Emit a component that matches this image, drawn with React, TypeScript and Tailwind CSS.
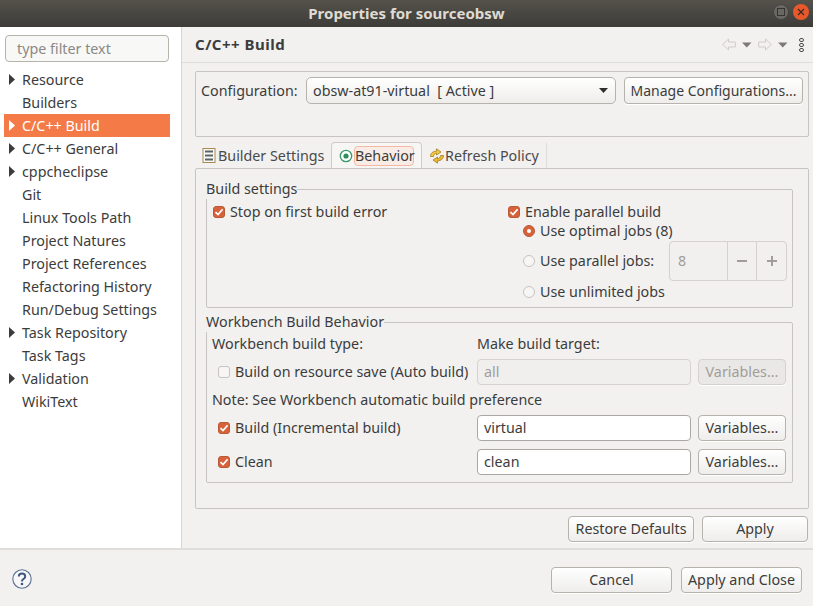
const treeItems = [
  { label: "Resource", arrow: true },
  { label: "Builders" },
  { label: "C/C++ Build", arrow: true, selected: true },
  { label: "C/C++ General", arrow: true },
  { label: "cppcheclipse", arrow: true },
  { label: "Git" },
  { label: "Linux Tools Path" },
  { label: "Project Natures" },
  { label: "Project References" },
  { label: "Refactoring History" },
  { label: "Run/Debug Settings" },
  { label: "Task Repository", arrow: true },
  { label: "Task Tags" },
  { label: "Validation", arrow: true },
  { label: "WikiText" },
]

const Button = ({ label, className = "", disabled = false }: { label: string; className?: string; disabled?: boolean }) => (
  <div
    className={`h-[26px] flex items-center justify-center rounded-[4px] border shadow-[0_1px_0_#ffffff] ${
      disabled
        ? "border-[#d5d1cc] bg-[#e9e8e6] text-[#a19d98]"
        : "border-[#b6b2ac] bg-gradient-to-b from-[#ffffff] to-[#eeedeb] text-[#3c3c3c]"
    } ${className}`}
  >
    {label}
  </div>
)

const Checkbox = ({ checked = false }: { checked?: boolean }) =>
  checked ? (
    <div className="w-[12px] h-[12px] rounded-[3px] bg-[#d7623a] border border-[#b95a36] flex items-center justify-center shrink-0">
      <svg width="10" height="10" viewBox="0 0 10 10">
        <path d="M1.5 5.2 L4 7.6 L8.6 2.2" fill="none" stroke="#ffffff" strokeWidth="1.7" />
      </svg>
    </div>
  ) : (
    <div className="w-[12px] h-[12px] rounded-[3px] bg-[#f7f6f5] border border-[#c6c3bf] shrink-0" />
  )

const Radio = ({ checked = false }: { checked?: boolean }) =>
  checked ? (
    <div className="w-[12px] h-[12px] rounded-full bg-[#d7623a] border border-[#b95a36] flex items-center justify-center shrink-0">
      <div className="w-[4px] h-[4px] rounded-full bg-white" />
    </div>
  ) : (
    <div className="w-[12px] h-[12px] rounded-full bg-[#f7f6f5] border border-[#c6c3bf] shrink-0" />
  )

const TextField = ({ value, disabled = false }: { value: string; disabled?: boolean }) => (
  <div
    className={`w-[214px] h-[26px] flex items-center pl-[6px] rounded-[4px] border ${
      disabled ? "border-[#d5d1cc] bg-[#f0efee] text-[#a19d98]" : "border-[#aaa7a2] bg-white text-[#3c3c3c]"
    }`}
  >
    {value}
  </div>
)

const BuilderIcon = () => (
  <svg width="14" height="15" viewBox="0 0 14 15" className="shrink-0">
    <rect x="1" y="0.5" width="12" height="14" fill="#f8f8f6" stroke="#a88a50" />
    <path d="M3 3.5h8M3 7.5h8M3 11.5h8" stroke="#5b6468" strokeWidth="2" />
  </svg>
)

const BehaviorIcon = () => (
  <svg width="14" height="14" viewBox="0 0 14 14" className="shrink-0">
    <circle cx="7" cy="7" r="5.7" fill="#ffffff" stroke="#3a9a6c" strokeWidth="1.3" />
    <circle cx="7" cy="7" r="2.6" fill="#2e8f5e" />
  </svg>
)

const RefreshIcon = () => (
  <svg width="16" height="16" viewBox="0 0 16 16" className="shrink-0">
    <path d="M1.5 8.5 C1.5 5 4 3.2 7.5 3.2 V0.8 L12 4 L7.5 7 V5.2 C6 5.2 4.8 6.4 4.4 8.5 Z" fill="#f5c842" stroke="#a07d20" strokeWidth="0.8" />
    <path d="M14.5 7.5 C14.5 11 12 12.8 8.5 12.8 V15.2 L4 12 L8.5 9 V10.8 C10 10.8 11.2 9.6 11.6 7.5 Z" fill="#eeb92f" stroke="#a07d20" strokeWidth="0.8" />
  </svg>
)

const NavArrow = ({ flip = false }: { flip?: boolean }) => (
  <svg width="14" height="13" viewBox="0 0 14 13" className={flip ? "-scale-x-100" : ""}>
    <path d="M0.7 6.5 L6.5 1 V4 H13.3 V9 H6.5 V12 Z" fill="#f2f1f0" stroke="#cfccc8" />
  </svg>
)

const SmallDown = () => (
  <svg width="10" height="6" viewBox="0 0 10 6">
    <path d="M0 0.5 H9.5 L4.75 5.5 Z" fill="#7d7a76" />
  </svg>
)

const App = () => {
  return (
    <div className="w-[813px] h-[606px] flex flex-col bg-[#f2f1f0] text-[#3c3c3c] text-[14.3px] font-['Noto_Sans',sans-serif] overflow-hidden">
      {/* title bar */}
      <div className="h-[27px] shrink-0 relative flex items-center justify-center bg-gradient-to-b from-[#55524c] to-[#3d3c38]">
        <span className="font-bold text-[15px] text-[#dfdbd2]">Properties for sourceobsw</span>
        <div className="absolute right-[4px] top-[4px] flex gap-[4px]">
          <div className="w-[16px] h-[16px] rounded-full bg-[#6a6862] border border-[#45433f] flex items-center justify-center">
            <div className="w-[8px] h-[8px] border border-[#35342f]" />
          </div>
          <div className="w-[16px] h-[16px] rounded-full bg-[#e9582b] flex items-center justify-center">
            <svg width="8" height="8" viewBox="0 0 8 8">
              <path d="M1 1 L7 7 M7 1 L1 7" stroke="#3d2a20" strokeWidth="1.3" />
            </svg>
          </div>
        </div>
      </div>

      <div className="h-[521px] shrink-0 flex">
        {/* left tree */}
        <div className="w-[182px] shrink-0 bg-white border-r border-[#d8d6d3] pt-[8px] px-[5px]">
          <div className="w-[164px] h-[27px] flex items-center pl-[11px] rounded-[4px] border border-[#b6b2ac] bg-[#f8f8f7] text-[#8b8985]">
            type filter text
          </div>
          <div className="mt-[6px] -ml-[1px] w-[166px]">
            {treeItems.map((item) => (
              <div
                key={item.label}
                className={`h-[23px] flex items-center ${item.selected ? "bg-[#f47a47] text-white" : ""}`}
              >
                <div className="w-[18px] shrink-0 pl-[5px]">
                  {item.arrow && (
                    <svg width="6" height="11" viewBox="0 0 6 11">
                      <path d="M0 0 L6 5.5 L0 11 Z" fill={item.selected ? "#ffffff" : "#3c3c3c"} />
                    </svg>
                  )}
                </div>
                {item.label}
              </div>
            ))}
          </div>
        </div>

        {/* right page */}
        <div className="flex-1 flex flex-col">
          <div className="h-[36px] shrink-0 pl-[13px] pr-[9px] flex items-center justify-between border-b border-[#dfddda]">
            <span className="font-bold text-[15px] tracking-[0.5px]">C/C++ Build</span>
            <div className="flex items-center gap-[6px]">
              <NavArrow />
              <SmallDown />
              <NavArrow flip />
              <SmallDown />
              <div className="ml-[5px] flex flex-col gap-[1px]">
                <div className="w-[5px] h-[4px] rounded-full border border-[#4c4c4c]" />
                <div className="w-[5px] h-[4px] rounded-full border border-[#4c4c4c]" />
                <div className="w-[5px] h-[4px] rounded-full border border-[#4c4c4c]" />
              </div>
            </div>
          </div>

          <div className="flex-1 pl-[13px] pr-[4px] pt-[8px]">
            {/* configuration */}
            <div className="h-[66px] border border-[#c8c5c1] rounded-[2px] pl-[5px] pt-[5px] flex items-start">
              <span className="w-[105px] h-[27px] flex items-center">Configuration:</span>
              <div className="w-[310px] h-[27px] flex items-center justify-between pl-[6px] pr-[7px] rounded-[5px] border border-[#b6b2ac] bg-gradient-to-b from-[#ffffff] to-[#eeedeb]">
                <span>obsw-at91-virtual&nbsp; [ Active ]</span>
                <svg width="9" height="5" viewBox="0 0 9 5">
                  <path d="M0 0 H9 L4.5 5 Z" fill="#2e2e2e" />
                </svg>
              </div>
              <Button label="Manage Configurations..." className="w-[179px] ml-[8px] h-[27px] text-[14px]" />
            </div>

            {/* tabs */}
            <div className="mt-[5px] h-[26px] flex items-end">
              <div className="h-[25px] w-[136px] flex items-center gap-[2px] pl-[7px] text-[#4a4a4a]">
                <BuilderIcon />
                Builder Settings
              </div>
              <div className="h-[26px] w-[91px] flex items-center gap-[1px] pl-[7px] bg-[#f7f6f5] border border-b-0 border-[#cfccc8] rounded-t-[4px]">
                <BehaviorIcon />
                <span className="w-[60px] text-center rounded-[4px] border border-[#f4b8a0] bg-[#f9ece6] leading-[18px]">Behavior</span>
              </div>
              <div className="h-[25px] w-[125px] flex items-center pl-[7px] border-r border-[#dfddda] text-[#4a4a4a]">
                <RefreshIcon />
                Refresh Policy
              </div>
            </div>

            {/* tab panel */}
            <div className="h-[341px] border border-[#c8c5c1] rounded-[2px] pl-[10px] pr-[15px] pt-[10px]">
              <fieldset className="h-[129px] border border-[#c8c5c1] rounded-[2px]">
                <legend className="-ml-[1px] leading-[20px]">Build settings</legend>
                <div className="flex pl-[6px] pt-[4px]">
                  <div className="w-[295px] flex items-center gap-[5px] h-[18px]">
                    <Checkbox checked />
                    Stop on first build error
                  </div>
                  <div className="flex flex-col">
                    <div className="flex items-center gap-[5px] h-[18px]">
                      <Checkbox checked />
                      Enable parallel build
                    </div>
                    <div className="flex items-center gap-[5px] h-[20px] ml-[15px]">
                      <Radio checked />
                      Use optimal jobs (8)
                    </div>
                    <div className="flex items-center h-[40px] ml-[15px]">
                      <div className="w-[146px] flex items-center gap-[5px]">
                        <Radio />
                        Use parallel jobs:
                      </div>
                      <div className="w-[118px] h-[40px] flex rounded-[4px] border border-[#d5d1cc] bg-[#f1f0ef] text-[#a19d98]">
                        <div className="w-[57px] flex items-center pl-[8px]">8</div>
                        <div className="w-[29px] flex items-center justify-center border-l border-[#d5d1cc]">
                          <div className="w-[10px] h-[2px] bg-[#a19d98]" />
                        </div>
                        <div className="flex-1 flex items-center justify-center border-l border-[#d5d1cc] relative">
                          <div className="w-[10px] h-[2px] bg-[#a19d98]" />
                          <div className="absolute w-[2px] h-[10px] bg-[#a19d98]" />
                        </div>
                      </div>
                    </div>
                    <div className="flex items-center gap-[5px] h-[21px] ml-[15px]">
                      <Radio />
                      Use unlimited jobs
                    </div>
                  </div>
                </div>
              </fieldset>

              <fieldset className="mt-[4px] h-[171px] border border-[#c8c5c1] rounded-[2px]">
                <legend className="-ml-[1px] leading-[20px]">Workbench Build Behavior</legend>
                <div className="pl-[5px] pt-[1px]">
                  <div className="h-[21px] flex items-center">
                    <span className="w-[265px]">Workbench build type:</span>
                    Make build target:
                  </div>
                  <div className="mt-[5px] h-[26px] flex items-center">
                    <div className="w-[265px] flex items-center gap-[5px] pl-[6px]">
                      <Checkbox />
                      Build on resource save (Auto build)
                    </div>
                    <TextField value="all" disabled />
                    <Button label="Variables..." disabled className="w-[88px] ml-[7px]" />
                  </div>
                  <div className="mt-[3px] h-[24px] flex items-center">Note: See Workbench automatic build preference</div>
                  <div className="mt-[3px] h-[26px] flex items-center">
                    <div className="w-[265px] flex items-center gap-[5px] pl-[6px]">
                      <Checkbox checked />
                      Build (Incremental build)
                    </div>
                    <TextField value="virtual" />
                    <Button label="Variables..." className="w-[88px] ml-[7px]" />
                  </div>
                  <div className="mt-[8px] h-[26px] flex items-center">
                    <div className="w-[265px] flex items-center gap-[5px] pl-[6px]">
                      <Checkbox checked />
                      Clean
                    </div>
                    <TextField value="clean" />
                    <Button label="Variables..." className="w-[88px] ml-[7px]" />
                  </div>
                </div>
              </fieldset>
            </div>

            {/* page buttons */}
            <div className="mt-[7px] flex justify-end gap-[8px] pr-[1px]">
              <Button label="Restore Defaults" className="w-[126px]" />
              <Button label="Apply" className="w-[106px]" />
            </div>
          </div>
        </div>
      </div>

      {/* footer */}
      <div className="flex-1 border-t-2 border-[#dfddda] flex items-center justify-between pl-[12px] pr-[11px] pt-[4px]">
        <svg width="20" height="20" viewBox="0 0 20 20" className="mb-[2px]">
          <circle cx="10" cy="10" r="9.2" fill="#f7f7f7" stroke="#5d7297" strokeWidth="1.1" />
          <path d="M6.8 7.6 Q6.8 4.6 10 4.6 Q13.2 4.6 13.2 7.4 Q13.2 9 11.4 10 Q10 10.8 10 12.4" fill="none" stroke="#3f5680" strokeWidth="2" />
          <circle cx="10" cy="15" r="1.3" fill="#3f5680" />
        </svg>
        <div className="flex gap-[9px]">
          <Button label="Cancel" className="w-[121px]" />
          <Button label="Apply and Close" className="w-[121px]" />
        </div>
      </div>
    </div>
  )
}

export default App
